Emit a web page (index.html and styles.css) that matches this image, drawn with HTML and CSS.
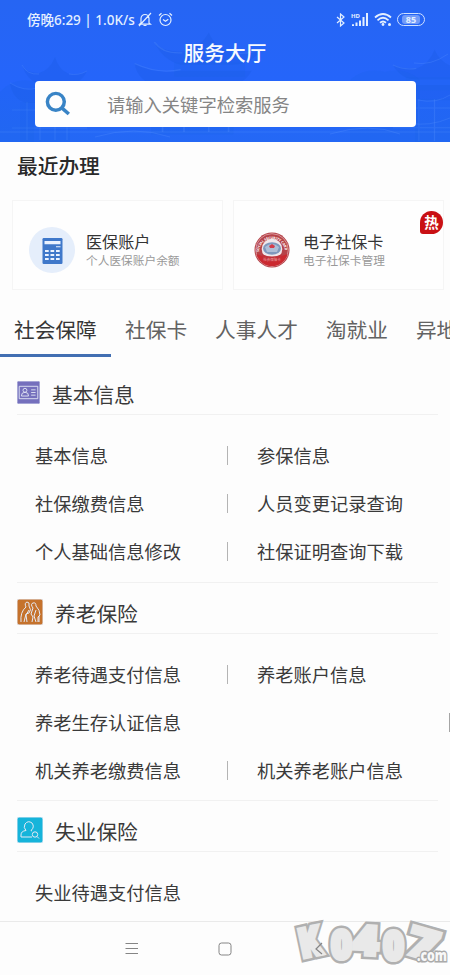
FILE: index.html
```html
<!DOCTYPE html>
<html lang="zh-CN">
<head>
<meta charset="utf-8">
<title>服务大厅</title>
<link rel="stylesheet" href="styles.css">
</head>
<body>
<header class="hero">
  <svg class="hero-art" viewBox="0 0 450 142" preserveAspectRatio="none" aria-hidden="true">
    <defs>
      <g id="tower">
        <path class="roof" d="M22 65q4 8 17 8q11-3 16-16q4 13 14 17q10 1 18-3q-6 13-18 13H38q-11-4-16-19z"/>
        <path class="wall" d="M34 82h43v12H34z"/>
        <path class="roof" d="M10 83q12 9 25 6h46q-5 14-22 14H26Q12 99 10 83z"/>
        <path class="wall" d="M20 102h50v40H20z"/>
        <path class="line" d="M22 65q5 10 17 9M87 71q-9 5-18 3M10 83q14 9 28 5M27 102v38M40 102v38M55 102v38M67 102v38M12 110h70M12 128h75"/>
      </g>
    </defs>
    <use href="#tower"/>
    <use href="#tower" transform="translate(118 -36) scale(1.65 1.2)"/>
    <use href="#tower" transform="translate(506 -13) scale(-1.3 1.1)"/>
    <path class="wall" d="M350 80q15-13 35-8q20-5 35 8v62h-70zM0 92q15-16 34-10v60H0z"/>
    <path class="line" d="M0 132h450M95 137q40-12 75 0M330 134q40-12 70 0M414 63q17 3 34-9M418 100q18 4 32-5M409 123q20 4 41-5"/>
  </svg>
  <div class="status">
    <span class="clock">傍晚6:29 | 1.0K/s</span>
    <svg class="bell" viewBox="0 0 14 15"><path d="M3 11V6.500a4 4 0 0 1 8 0V11l1.500 1.200H1.500zM5.500 13.500h3M13 1 1 14"/></svg>
    <svg class="alarm" viewBox="0 0 15 15"><circle cx="7.500" cy="8" r="5.500"/><path d="m5 7.500 2.500 1.800 2.800-2M1 3.500 3.500 1.300M14 3.500l-2.500-2.200"/></svg>
    <span class="gap"></span>
    <svg class="bt" viewBox="0 0 9 14"><path d="m1 4 7 6-3.500 3V1L8 4l-7 6"/></svg>
    <svg class="signal" viewBox="0 0 19 15"><text x="0" y="5.500">HD</text><path d="M2 14v-1.800M5.500 14v-3.500M9 14V8.500M12.500 14V5M16 14V1"/></svg>
    <svg class="wifi" viewBox="0 0 19 15"><path d="M1 5.500q8-7 16 0M3.500 8.300q5.500-5 11 0M6 10.800q3-2.600 6 0"/><circle cx="9" cy="12.500" r="1.400"/><circle cx="15.500" cy="12.500" r="1.500"/></svg>
    <span class="battery"><b>85</b></span>
  </div>
  <h1>服务大厅</h1>
  <div class="search">
    <svg viewBox="0 0 24 24"><circle cx="10" cy="10" r="7.800"/><path d="m16 16 6 5.300"/></svg>
    <span>请输入关键字检索服务</span>
  </div>
</header>

<main>
  <h2>最近办理</h2>
  <div class="cards">
    <div class="card">
      <svg class="card-icon" viewBox="0 0 46 46"><circle cx="23" cy="23" r="23" fill="#e5eefb"/><rect x="13.500" y="11" width="20" height="26" rx="1.200" fill="#3f78ca"/><path fill="#eaf2ff" d="M15.500 14h16v3.300h-16zM27 19.300h4.500v1H27zM16 23h3.700v2H16zM21.500 23h3.700v2h-3.700zM27 23h3.700v2H27zM16 27h3.700v2H16zM21.500 27h3.700v2h-3.700zM27 27h3.700v2H27zM16 31h3.700v2H16zM21.500 31h3.700v2h-3.700zM27 31h3.700v2H27z"/></svg>
      <div><p class="name">医保账户</p><p class="note">个人医保账户余额</p></div>
    </div>
    <div class="card second">
      <svg class="seal" viewBox="0 0 36 36">
        <defs><path id="arc-top" d="M5 20a13 13 0 0 1 26 0"/></defs>
        <circle cx="18" cy="18" r="17.500" fill="#b64349"/><circle cx="18" cy="18" r="16.300" fill="none" stroke="#e6b8bb" stroke-width=".7"/>
        <path d="M2.500 22q15.500 7 31 0A16 16 0 0 1 2.500 22z" fill="#cb2930"/>
        <circle cx="18" cy="17" r="10.300" fill="#f0e7eb"/><ellipse cx="18" cy="16.500" rx="9" ry="6.200" fill="#7f98bd"/><path d="M11 15q7-6 14 0l-2 5H13z" fill="#aebed7"/><path d="m15 14 3-2 3 2-1 2h-4z" fill="#d43c4b"/><path d="M8 22q10 5 20 0l-2 6q-8 3-16 0z" fill="#c0323a"/>
        <text class="seal-en"><textPath href="#arc-top" textLength="39">SOCIAL SECURITY CARD</textPath></text>
        <text class="seal-cn" x="18" y="29" text-anchor="middle">社会保障卡</text>
      </svg>
      <div><p class="name">电子社保卡</p><p class="note">电子社保卡管理</p></div>
      <span class="hot">热</span>
    </div>
  </div>

  <nav class="tabs"><span class="active">社会保障</span><span>社保卡</span><span>人事人才</span><span>淘就业</span><span>异地</span></nav>

  <section class="first">
    <h3><svg class="id" viewBox="0 0 26 26"><rect width="26" height="26" rx="1.500" fill="#7570bd"/><path d="M2.500 6h21v14h-21zM5 17q0-4 3-4h2q3 0 3 4zM16 10h5M16 13h5M16 16h5"/><circle cx="9" cy="10.500" r="2.200"/></svg>基本信息</h3>
    <div class="links">
      <a>基本信息</a><a class="right">参保信息</a>
      <a>社保缴费信息</a><a class="right">人员变更记录查询</a>
      <a>个人基础信息修改</a><a class="right">社保证明查询下载</a>
    </div>
  </section>
  <section class="pension">
    <h3><svg viewBox="0 0 26 26"><rect width="26" height="26" rx="2" fill="#c5722c"/><path d="M4 23q-1-10 5-15-2-4 1-5 3 0 2 4 3 4 0 7l-3 1-2 8M12 11l-3 5 1 7M16 9q-3-4 0-5 3-1 3 3 4 4 4 9l-2 2v5M16 9l-2 6 2 3-1 5M19 11l-2 6 2 6M22 17v6"/></svg>养老保险</h3>
    <div class="links">
      <a>养老待遇支付信息</a><a class="right">养老账户信息</a>
      <a class="wide">养老生存认证信息</a>
      <a>机关养老缴费信息</a><a class="right">机关养老账户信息</a>
    </div>
  </section>
  <section class="last">
    <h3><svg viewBox="0 0 26 26"><rect width="26" height="26" rx="2" fill="#16b4da"/><path d="M15 20H4v-2q0-4 5-4.500Q6 10.500 8 7q3-4 7-1 3 4-1 7.500l1 .5"/><circle cx="18" cy="17.500" r="2.700"/><path d="m20 19.500 2 2"/></svg>失业保险</h3>
    <div class="links"><a>失业待遇支付信息</a></div>
  </section>
</main>

<footer>
  <svg class="menu" viewBox="0 0 14 14"><path d="M.5 1.500h12.500M.5 6.500h12.500M.5 11.500h12.500"/></svg>
  <svg class="home" viewBox="0 0 14 14"><rect x="1" y="1" width="12" height="12" rx="2.500"/></svg>
</footer>
<svg class="brand" viewBox="0 0 160 50">
  <defs>
    <g id="digits">
      <text transform="translate(12 40) rotate(-12)" textLength="22" lengthAdjust="spacingAndGlyphs">K</text>
      <text transform="translate(41 41)" textLength="21" lengthAdjust="spacingAndGlyphs">0</text>
      <text transform="translate(63 36) rotate(3)" textLength="25" lengthAdjust="spacingAndGlyphs">4</text>
      <text transform="translate(93 42)" textLength="21" lengthAdjust="spacingAndGlyphs">0</text>
      <text transform="translate(115 35) rotate(16)" textLength="30" lengthAdjust="spacingAndGlyphs">7</text>
    </g>
  </defs>
  <use href="#digits" class="digits rim"/>
  <use href="#digits" class="digits face"/>
  <text class="domain" x="127" y="43" textLength="30" lengthAdjust="spacingAndGlyphs">.com</text>
  <path class="back-mark" d="m32 25-6 6 6 5"/>
</svg>
</body>
</html>
```
FILE: styles.css
```css
* { box-sizing: border-box; }
body, h1, h2, h3, p { margin: 0; }
body {
  position: relative;
  width: 450px;
  height: 975px;
  overflow: hidden;
  background: #fdfdfd;
  color: #3a3a3a;
  font-family: "Noto Sans CJK SC", sans-serif;
}
svg { flex: none; fill: none; }
h1, h2, h3 { font-size: 20.700px; white-space: nowrap; }

.hero {
  position: relative;
  height: 142px;
  background: linear-gradient(#2665f3, #2565fb 60%, #2468f5);
}
.hero-art { position: absolute; inset: 0; width: 450px; height: 142px; }
.roof { fill: #1455d8; opacity: .2; }
.wall { fill: #1966e4; opacity: .2; }
.line { stroke: #639dff; stroke-width: 1; opacity: .23; }
.status {
  position: relative;
  display: flex;
  align-items: center;
  height: 39px;
  padding: 0 25px 0 27px;
  color: #e3efff;
}
.status svg { stroke: currentColor; stroke-width: 1.200; }
.clock {
  width: 111px;
  font: 500 13.500px/20px "Noto Sans", "Noto Sans CJK SC", sans-serif;
  white-space: nowrap;
}
.bell { width: 14px; height: 15px; }
.alarm { width: 15px; height: 15px; margin-left: 6px; }
.gap { flex: 1; }
.bt { width: 9px; height: 14px; margin-right: 6px; }
.signal { width: 19px; height: 15px; margin-right: 4px; }
.status .signal path { stroke-width: 2; }
.signal text { font: bold 6px "Noto Sans", sans-serif; fill: currentColor; stroke: none; }
.wifi { width: 19px; height: 15px; margin-right: 4px; }
.status .wifi path { stroke-width: 1.800; }
.status .wifi circle { fill: currentColor; stroke: none; }
.battery {
  display: flex;
  width: 28px;
  height: 13px;
  padding: 1px 4px;
  border: 1px solid #cfe0ff;
  border-radius: 7px;
}
.battery b {
  flex: 1;
  border-radius: 3px;
  background: #729bf9;
  font: bold 9px/9px "Noto Sans", sans-serif;
  text-align: center;
}
h1 {
  position: relative;
  height: 42px;
  color: #f7faff;
  font-weight: 500;
  line-height: 26px;
  text-align: center;
}
.search {
  position: relative;
  display: flex;
  align-items: center;
  width: 381px;
  height: 46px;
  margin-left: 35px;
  padding-left: 10px;
  border-radius: 4px;
  background: #fefefe;
  color: #858585;
  font-size: 18.300px;
}
.search svg { width: 26px; height: 26px; margin-right: 36px; stroke: #3984c6; stroke-width: 3.200; }

h2 { height: 58px; padding: 7px 0 0 17px; color: #292929; font-weight: 500; line-height: 32px; }
.cards { display: flex; gap: 10px; padding-left: 12px; }
.card {
  position: relative;
  display: flex;
  align-items: center;
  width: 211px;
  height: 90px;
  padding: 9px 0 0 16px;
  border: 1px solid #f5f5f5;
  background: #fefefe;
}
.card-icon { width: 46px; height: 46px; margin-right: 11px; }
.seal { width: 36px; height: 36px; margin-right: 13px; }
.card.second { padding-left: 20px; }
.name { color: #343434; font-size: 16.100px; line-height: 20px; }
.note { color: #999; font-size: 11.700px; line-height: 17px; }
.seal-en { font: bold 3.500px "Noto Sans", sans-serif; fill: #fff; }
.seal-cn { font-size: 3.500px; fill: #f2a0a2; }
.hot {
  position: absolute;
  top: 10px;
  right: 0;
  width: 23px;
  height: 23px;
  border-radius: 50% 50% 50% 3px;
  background: #c91014;
  color: #fff;
  font-size: 14.500px;
  font-weight: 700;
  line-height: 22px;
  text-align: center;
}

.tabs {
  display: flex;
  height: 67px;
  overflow: hidden;
  color: #626262;
  font-size: 20.700px;
  line-height: 31px;
  white-space: nowrap;
}
.tabs span { flex: none; height: 67px; padding: 24px 14px 0; }
.tabs .active { width: 111px; border-bottom: 3px solid #426fb2; color: #363636; }

section { margin: 0 12px 0 17px; border-bottom: 1px solid #f1f1f1; }
h3 {
  display: flex;
  align-items: center;
  height: 51px;
  padding-top: 9px;
  border-bottom: 1px solid #f1f1f1;
  font-weight: 400;
}
h3 svg { width: 26px; height: 26px; margin: -2px 12px 0 0; stroke: #e5eaf6; stroke-width: 1; }
.first h3 { height: 58px; padding-top: 17px; }
h3 .id { width: 23px; height: 23px; margin: -4px 12px 0 0; }
.links {
  display: grid;
  grid-template-columns: 210px 1fr;
  grid-auto-rows: 48px;
  align-items: center;
  height: 167px;
  padding-top: 16px;
  font-size: 18.250px;
  line-height: 26px;
  white-space: nowrap;
}
.links a { display: flex; align-items: center; padding-left: 18px; }
.links .right { padding-left: 0; }
.right::before {
  content: "";
  width: 1px;
  height: 19px;
  margin-right: 29px;
  background: #b4b4b4;
}
.wide { grid-column: 1 / -1; width: 433px; }
.wide::after { content: ""; width: 1px; height: 19px; margin-left: auto; background: #a5a5a5; }
.pension .links { height: 166px; }
.last { border: 0; }
.last .links { height: 69px; }

footer {
  display: flex;
  align-items: center;
  height: 54px;
  padding: 0 125px;
  border-top: 1px solid #eaeaea;
}
footer svg { stroke: #858585; stroke-width: 1; }
.menu { width: 14px; height: 14px; }
.home { width: 14px; height: 14px; margin-left: 79px; }
.brand { position: absolute; left: 290px; top: 918px; width: 160px; height: 50px; }
.digits { font: 800 40px "Open Sans", sans-serif; }
.rim { fill: #b0b0b0; stroke: #b0b0b0; stroke-width: 9px; }
.face { fill: #e9e9e9; stroke: #e9e9e9; stroke-width: 4px; }
.domain { font: 800 16px "Open Sans", sans-serif; fill: #f8f8f8; stroke: #aaa; stroke-width: 3px; paint-order: stroke; }
.back-mark { stroke: #858585; stroke-width: 1.200; }
```
